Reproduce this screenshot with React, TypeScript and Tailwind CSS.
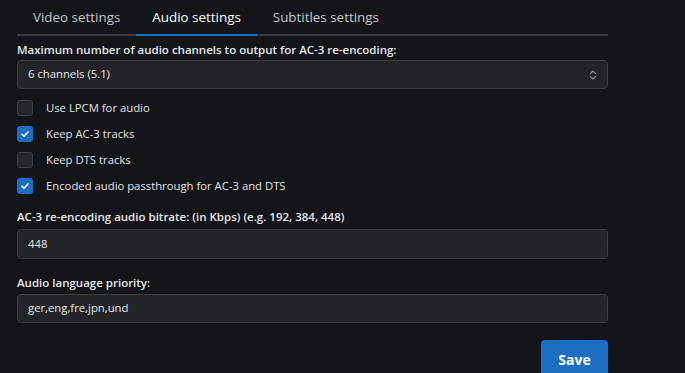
import React from "react";

const tabs = ["Video settings", "Audio settings", "Subtitles settings"];

const checks = [
  { label: "Use LPCM for audio", on: false },
  { label: "Keep AC-3 tracks", on: true },
  { label: "Keep DTS tracks", on: false },
  { label: "Encoded audio passthrough for AC-3 and DTS", on: true },
];

function Check({ on }: { on: boolean }) {
  if (on) {
    return (
      <span className="w-4 h-4 rounded-[3px] bg-[#1b6ec2] flex items-center justify-center shrink-0">
        <svg width="10" height="10" viewBox="0 0 10 10" fill="none">
          <path d="M2 5.2l2 2 4-4.2" stroke="white" strokeWidth="1.6" strokeLinecap="round" strokeLinejoin="round" />
        </svg>
      </span>
    );
  }
  return <span className="w-4 h-4 rounded-[3px] bg-[#26272b] border border-[#3c3d41] shrink-0" />;
}

export default function App() {
  return (
    <div className="h-screen overflow-hidden bg-[#141518] text-[#dcdcdc] font-['Open_Sans',sans-serif]">
      <div className="ml-[17px] w-[591px]">
        <div className="flex h-[36px] border-b-2 border-[#3a3b3f]">
          {tabs.map((t, i) => (
            <div
              key={t}
              className={`px-4 pt-[7px] text-[13.4px] leading-[20px] -mb-[2px] ${
                i === 1 ? "text-white border-b-2 border-[#1b6ec2]" : "text-[#c4c6ca]"
              }`}
            >
              {t}
            </div>
          ))}
        </div>

        <div className="mt-[6px] leading-[16px] text-[11.5px] font-semibold text-[#e6e7e9]">
          Maximum number of audio channels to output for AC-3 re-encoding:
        </div>
        <div className="mt-[2px] h-[29px] rounded-[4px] bg-[#232428] border border-[#3a3b3f] flex items-center justify-between pl-[10px] pr-[10px] text-[11.3px] text-[#e6e7e9]">
          <span>6 channels (5.1)</span>
          <svg width="8" height="12" viewBox="0 0 8 12" fill="none">
            <path d="M1.5 4.5L4 2l2.5 2.5M1.5 7.5L4 10l2.5-2.5" stroke="#8a8c90" strokeWidth="1.1" strokeLinecap="round" strokeLinejoin="round" />
          </svg>
        </div>

        <div className="mt-[11px] flex flex-col gap-[10px]">
          {checks.map((c) => (
            <div key={c.label} className="flex items-center gap-[13px] h-4 text-[11.3px] text-[#e0e1e4]">
              <Check on={c.on} />
              <span>{c.label}</span>
            </div>
          ))}
        </div>

        <div className="mt-[15px] leading-[16px] text-[11.5px] font-semibold text-[#e6e7e9]">
          AC-3 re-encoding audio bitrate: (in Kbps) (e.g. 192, 384, 448)
        </div>
        <div className="mt-[4px] h-[30px] rounded-[4px] bg-[#232428] border border-[#3a3b3f] flex items-center pl-[10px] text-[11.3px] text-[#e6e7e9]">
          448
        </div>

        <div className="mt-[16px] leading-[16px] text-[11.5px] font-semibold text-[#e6e7e9]">
          Audio language priority:
        </div>
        <div className="mt-[3px] h-[29px] rounded-[4px] bg-[#232428] border border-[#3a3b3f] flex items-center pl-[10px] text-[11.3px] text-[#e6e7e9]">
          ger,eng,fre,jpn,und
        </div>

        <div className="mt-[17px] flex justify-end">
          <button className="w-[67px] h-[38px] rounded-[4px] bg-[#1b6ec2] text-white text-[14px] font-bold">
            Save
          </button>
        </div>
      </div>
    </div>
  );
}
